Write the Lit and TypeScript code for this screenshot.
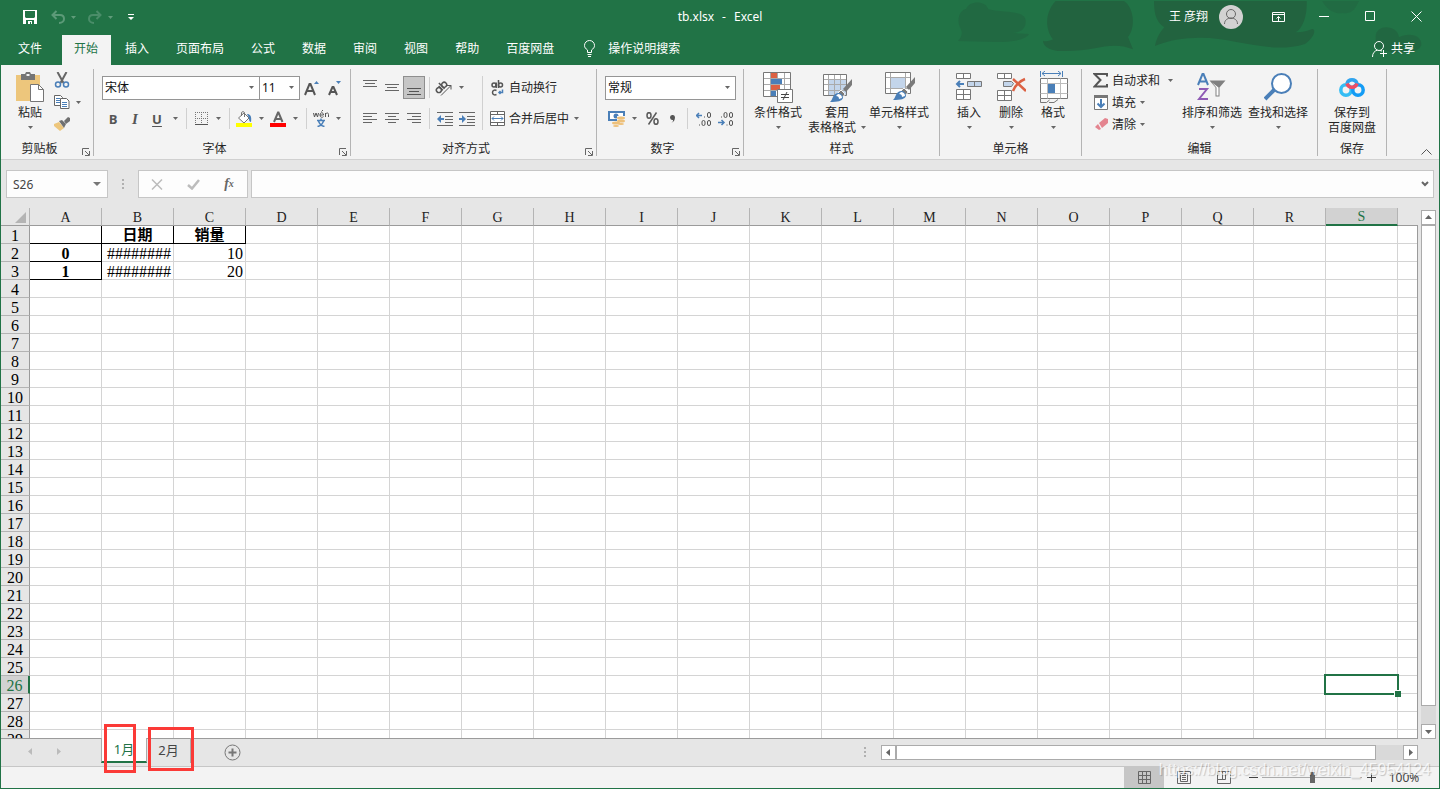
import { LitElement, html, css, nothing, TemplateResult } from "lit";
import { customElement, state } from "lit/decorators.js";
import { classMap } from "lit/directives/class-map.js";

const caret = html`<svg class="caret" width="5" height="3" viewBox="0 0 5 3"><path d="M0 0h5L2.5 3z" fill="#666" /></svg>`;

const brush = html`<svg x="13" y="8" width="24" height="24" viewBox="0 0 24 24">
  <path d="M23 0v6l-6 7-3-3z" fill="#7a7a7a" />
  <path d="M12 11l4 4-2 3-5-4z" fill="#7a7a7a" stroke="#f3f3f3" />
  <path d="M9 14c3 0 5 2 5 5-1 3-5 4-13 4 3-2 2-8 8-9z" fill="#4a7fb8" />
  <path d="M9 15c2 0 4 1 4 4l-3 1c0-2-1-3-3-3z" fill="#fff" />
</svg>`;

const icons: Record<string, TemplateResult> = {
  save: html`<svg width="14" height="14" viewBox="0 0 14 14"><path d="M0 0h14v14H0z" fill="#fff" /><path d="M2 1h10v6l-1 1H3L2 7zM3 10h8v4H3z" fill="#217346" /><path d="M5 11h4v3H8v-2H7v2H5z" fill="#fff" /></svg>`,
  undo: html`<svg width="14" height="14" viewBox="0 0 14 14" fill="none" stroke="#5c9a78" stroke-width="2"><path d="M5.500 1L1.500 5l4 4M2 5h7c3 0 4 2 4 4s-2 4-5 4" /></svg>`,
  redo: html`<svg width="14" height="14" viewBox="0 0 14 14" fill="none" stroke="#4a8d69" stroke-width="2"><path d="M8.500 1l4 4-4 4M12 5H5C2 5 1 7 1 9s2 4 5 4" /></svg>`,
  quick: html`<svg width="6" height="6" viewBox="0 0 6 6" fill="#fff"><path d="M0 0h6v1H0zM0 3h6L3 6z" /></svg>`,
  bulb: html`<svg width="13" height="17" viewBox="0 0 13 17" fill="none" stroke="#fff"><path d="M4.500 12.500V10C2.500 8.500 1.500 7.500 1.500 5.500a5 5 0 0 1 10 0c0 2-1 3-3 4.500v2.500zM4.500 14.500h4M5 16.500h3" /></svg>`,
  share: html`<svg width="15" height="16" viewBox="0 0 15 16" fill="none" stroke="#fff"><circle cx="7" cy="5" r="4.500" /><path d="M.5 16c0-4 2-6 5-7M8 9.500l2 .5M11.500 9v7M8 12.500h7" /></svg>`,
  ribbonBox: html`<svg width="13" height="10" viewBox="0 0 13 10" fill="none" stroke="#fff"><path d="M.5.5h12v9H.5zM0 2.500h13M6.500 9V4.500M4.500 6.500l2-2 2 2" /></svg>`,
  minimize: html`<svg width="11" height="11" viewBox="0 0 11 11" stroke="#fff"><path d="M0 5.500h10" /></svg>`,
  maximize: html`<svg width="11" height="11" viewBox="0 0 11 11" fill="none" stroke="#fff"><path d="M.5.5h9v9H.5z" /></svg>`,
  close: html`<svg width="11" height="11" viewBox="0 0 11 11" stroke="#fff"><path d="M.5.5l10 10M10.500.5l-10 10" /></svg>`,
  paste: html`<svg width="32" height="32" viewBox="0 0 32 32"><path d="M2 4h24v26H2z" fill="#edc67c" /><path d="M7 3h4l1-2h4l1 2h4v6H7z" fill="#757575" /><path d="M12.500 3h3v2h-3z" fill="#f3f3f3" /><path d="M16.500 13.500h8l5 5v12h-13z" fill="#fff" stroke="#757575" /><path d="M24.500 13.500v5h5" fill="none" stroke="#757575" /></svg>`,
  cut: html`<svg width="16" height="16" viewBox="0 0 16 16" fill="none"><path d="M3.500 0l6 11M12.500 0l-6 11" stroke="#666" stroke-width="2" /><circle cx="4" cy="12.500" r="2.500" stroke="#4a7fb8" stroke-width="1.500" /><circle cx="12" cy="12.500" r="2.500" stroke="#4a7fb8" stroke-width="1.500" /></svg>`,
  copy: html`<svg width="16" height="14" viewBox="0 0 16 14" stroke="#666"><path d="M.5.5h6l2 2v8h-8z" fill="#fff" /><path d="M2 3.500h4M2 5.500h4M2 7.500h4" stroke="#4a7fb8" /><path d="M6.500 3.500h6l2.500 2.500v7.500H6.500z" fill="#fff" /><path d="M8 7.500h5M8 9.500h5M8 11.500h5" stroke="#4a7fb8" /></svg>`,
  format: html`<svg width="16" height="16" viewBox="0 0 16 16"><path d="M0 8l5-2 5 6-4 3-6-5z" fill="#edc67c" /><path d="M5 5l3-1 4 4-2 4z" fill="#707070" /><path d="M10 5l4-4 2 1v3l-4 3z" fill="#707070" /></svg>`,
  grow: html`<svg width="16" height="16" viewBox="0 0 16 16"><path d="M1 15L5.500 4h1L11 15M3 11h6" fill="none" stroke="#555" stroke-width="2" /><path d="M10 4l2.500-3L15 4z" fill="#4a7fb8" /></svg>`,
  shrink: html`<svg width="16" height="16" viewBox="0 0 16 16"><path d="M3 15l3.500-8h1L11 15M5 12h4" fill="none" stroke="#555" stroke-width="2" /><path d="M10 1h5l-2.500 3z" fill="#4a7fb8" /></svg>`,
  border: html`<svg width="13" height="13" viewBox="0 0 13 13" stroke="#777" stroke-dasharray="1 1"><path d="M0 .5h13M0 6.500h13M.5 0v12M6.500 0v12M12.500 0v12" /><path d="M0 12.500h13" stroke-dasharray="none" stroke="#555" /></svg>`,
  fill: html`<svg width="16" height="16" viewBox="0 0 16 16"><path d="M0 12h16v4H0z" fill="#ffff00" /><path d="M2.500 7L8 2l5 5-5 5z" fill="#fff" stroke="#757575" /><path d="M5.500 5V1.500L7 .5l1.500 1V6" fill="none" stroke="#757575" /><path d="M11 3c3 0 5 2 4 8-2 0-2-3-2-4z" fill="#4a7fb8" /></svg>`,
  color: html`<svg width="16" height="16" viewBox="0 0 16 16"><path d="M0 12h16v4H0z" fill="#ff0000" /><path d="M4 11l4-9.500h.5l4 9.500M5.500 8h6" fill="none" stroke="#666" stroke-width="2" /></svg>`,
  phonetic: html`<svg width="16" height="17" viewBox="0 0 16 17" fill="none"><path d="M.5 3l1 4 1.500-4 1.500 4 1-4M7 5h3.500c0-3-3.500-3-3.500 0s3 2.500 3.500 1.500M8.500 1.500L10 0M12.500 7V3M12.500 4.500c1-2 3-2 3 0V7" stroke="#555" /><path d="M4 10.500h8M8 8.500v2M5.500 11c1 3 3 5 6 5.500M10.500 11c-1 3-3 5-6 5.500" stroke="#4a7fb8" stroke-width="1.500" /></svg>`,
  top: html`<svg width="14" height="15" viewBox="0 0 14 15" stroke="#666"><path d="M0 .5h14M2 3.500h10M0 6.500h14" /></svg>`,
  middle: html`<svg width="14" height="15" viewBox="0 0 14 15" stroke="#666"><path d="M0 4.500h14M2 7.500h10M0 10.500h14" /></svg>`,
  bottom: html`<svg width="14" height="15" viewBox="0 0 14 15" stroke="#555"><path d="M0 8.500h14M2 11.500h10M0 14.500h14" /></svg>`,
  left: html`<svg width="14" height="11" viewBox="0 0 14 11" stroke="#666"><path d="M0 .5h14M0 3.500h9M0 6.500h14M0 9.500h9" /></svg>`,
  center: html`<svg width="14" height="11" viewBox="0 0 14 11" stroke="#666"><path d="M0 .5h14M3 3.500h8M0 6.500h14M3 9.500h8" /></svg>`,
  right: html`<svg width="14" height="11" viewBox="0 0 14 11" stroke="#666"><path d="M0 .5h14M5 3.500h9M0 6.500h14M5 9.500h9" /></svg>`,
  rotate: html`<svg width="18" height="16" viewBox="0 0 18 16" fill="none" stroke="#555"><g transform="rotate(-45 6 8)" stroke-width="1.500"><circle cx="3" cy="8" r="2.500" /><path d="M5.700 5v6M8 3v8" /><circle cx="10.500" cy="8" r="2.500" /></g><path d="M6 15.500L16 5.500M12 5.500h4v4" /></svg>`,
  outdent: html`<svg width="16" height="14" viewBox="0 0 16 14"><path d="M0 .5h16M8 4.500h8M8 7.500h8M8 10.500h8M0 13.500h16" stroke="#666" /><path d="M0 7l4-4v3h3v2H4v3z" fill="#4a7fb8" /></svg>`,
  indent: html`<svg width="16" height="14" viewBox="0 0 16 14"><path d="M0 .5h16M8 4.500h8M8 7.500h8M8 10.500h8M0 13.500h16" stroke="#666" /><path d="M7 7L3 3v3H0v2h3v3z" fill="#4a7fb8" /></svg>`,
  wrap: html`<svg width="16" height="16" viewBox="0 0 16 16" fill="none" stroke="#555" stroke-width="1.500"><circle cx="4" cy="5" r="2" /><path d="M6.200 2.500V8M8.500 0v8M6.500 10.500c-2-1-4 0-4 2s2 3 4 2" /><circle cx="10.500" cy="5" r="2" /><path d="M12.500 9.500v3H9M10.500 11L9 12.500l1.500 1.500" stroke="#4a7fb8" /></svg>`,
  merge: html`<svg width="16" height="16" viewBox="0 0 16 16" fill="none"><path d="M.5.5h14v14H.5z" fill="#fff" stroke="#666" /><path d="M.5 3.500h14M.5 11.500h14M7.500.5v3M7.500 11.500v3" stroke="#666" /><path d="M2 7.500h11M4 5.500l-2 2 2 2M11 5.500l2 2-2 2" stroke="#4a7fb8" /></svg>`,
  currency: html`<svg width="17" height="16" viewBox="0 0 17 16"><path d="M1 1h15v8H1z" fill="#fff" stroke="#4a7fb8" stroke-width="2" /><circle cx="8" cy="5" r="2.500" fill="#4a7fb8" /><path d="M9 5h8v10H4V10h5z" fill="#f3f3f3" /><g fill="#edc07a"><ellipse cx="13" cy="7" rx="4" ry="1.500" /><ellipse cx="13" cy="10" rx="4" ry="1.500" /><ellipse cx="8" cy="12" rx="4" ry="1.500" /><ellipse cx="13" cy="13" rx="3" ry="1" /><ellipse cx="8" cy="15" rx="3" ry="1" /></g></svg>`,
  percent: html`<svg width="13" height="13" viewBox="0 0 13 13" fill="none" stroke="#5a5a5a" stroke-width="1.500"><ellipse cx="3" cy="3.500" rx="2" ry="2.800" /><ellipse cx="10" cy="9.500" rx="2" ry="2.800" /><path d="M10.500 .5l-8 12" /></svg>`,
  comma: html`<svg width="6" height="9" viewBox="0 0 6 9"><path d="M1 9c2-1 2-2 2-3a2.500 2.500 0 1 1 2-3c0 3-1 5-4 6z" fill="#555" /></svg>`,
  moreDecimals: html`<svg width="15" height="14" viewBox="0 0 15 14" fill="none" stroke="#555"><path d="M0 3.500h6M3 1L.5 3.500 3 6" stroke="#4a7fb8" stroke-width="1.500" /><path d="M8 5h1M3 13h1" /><rect x="11.500" y=".5" width="3" height="5" rx="1.500" /><rect x="6" y="8.500" width="3" height="5" rx="1.500" /><rect x="11.500" y="8.500" width="3" height="5" rx="1.500" /></svg>`,
  lessDecimals: html`<svg width="15" height="14" viewBox="0 0 15 14" fill="none" stroke="#555"><path d="M0 10.500h6M3.500 8L6 10.500 3.500 13" stroke="#4a7fb8" stroke-width="1.500" /><path d="M3 5h1M8.500 13h1" /><rect x="6" y=".5" width="3" height="5" rx="1.500" /><rect x="11.500" y=".5" width="3" height="5" rx="1.500" /><rect x="11.500" y="8.500" width="3" height="5" rx="1.500" /></svg>`,
  conditional: html`<svg width="30" height="31" viewBox="0 0 30 31"><path d="M.5.5h27v24H.5z" fill="#fff" /><path d="M.5 6.500h27M.5 12.500h27M.5 18.500h27M7.500.5v24M14.500.5v24M21.500.5v24" stroke="#aaa" /><path d="M.5.5h27v24H.5z" fill="none" stroke="#777" /><path d="M8 1h6v5H8zM8 13h9v5H8z" fill="#dc6143" /><path d="M8 7h11v5H8zM8 19h5v5H8z" fill="#4a7fb8" /><path d="M14.500 17.500h15v13h-15z" fill="#fff" stroke="#777" /><path d="M18 22.500h8M18 25.500h8M24 20l-4 8" stroke="#444" /></svg>`,
  tableStyle: html`<svg width="42" height="32" viewBox="0 0 42 32"><path d="M7.500 3.500h23v21h-23z" fill="#fff" /><path d="M13 9h17v15H13z" fill="#c3d5eb" /><path d="M7.500 8.500h23M7.500 13.500h23M7.500 19.500h23M12.500 3.500v21M18.500 3.500v21M24.500 3.500v21" stroke="#aaa" /><path d="M7.500 3.500h23v21h-23z" fill="none" stroke="#777" />${brush}</svg>`,
  cellStyle: html`<svg width="42" height="32" viewBox="0 0 42 32"><path d="M7.500 1.500h25v21h-25z" fill="#fff" /><path d="M7.500 6.500h25M7.500 17.500h25M12.500 1.500v21M27.500 1.500v21" stroke="#aaa" /><path d="M13 7h14v10H13z" fill="#c3d5eb" /><path d="M7.500 1.500h25v21h-25z" fill="none" stroke="#777" /><svg x="1" y="-2" width="41" height="34">${brush}</svg></svg>`,
  insert: html`<svg width="28" height="30" viewBox="0 0 28 30" fill="#fff" stroke="#777"><path d="M1.500 1.500h14v5h-14zM8.500 1.500v5M1.500 17.500h14v10h-14zM1.500 22.500h14M8.500 17.500v10" /><path d="M12.500 9.500h14v5h-14zM19.500 9.500v5" fill="#c3d5eb" /><path d="M2 12h7M5 9l-3 3 3 3" fill="none" stroke="#4a7fb8" stroke-width="2" /></svg>`,
  remove: html`<svg width="30" height="30" viewBox="0 0 30 30" fill="#fff" stroke="#777"><path d="M1.500 1.500h14v5h-14zM8.500 1.500v5M1.500 18.500h14v10h-14zM1.500 23.500h14M8.500 18.500v10" /><path d="M7.500 9.500h8l2 2-2 3h-8z" fill="#c3d5eb" /><path d="M17 7l13 12M29 7C24 9 19 14 17 19" fill="none" stroke="#dc6143" stroke-width="2.500" /></svg>`,
  cellFormat: html`<svg width="29" height="32" viewBox="0 0 29 32" fill="none"><path d="M1.500 0v6M23.500 0v6M3 2.500h19M6 0L3 2.500 6 5M19 0l3 2.500L19 5" stroke="#4a7fb8" /><path d="M1.500 7.500h27v20h-27z" fill="#fff" stroke="#777" /><path d="M1.500 12.500h27M1.500 22.500h27M8.500 7.500v20M21.500 7.500v20" stroke="#bbb" /><path d="M9 13h7v9H9z" fill="#4a7fb8" /><path d="M1.500 28v3.500h6l3-2.500M10 31.500h5l4-3" stroke="#777" /></svg>`,
  sum: html`<svg width="15" height="15" viewBox="0 0 15 15" fill="none"><path d="M14 3.500V1H1.500l6 6-6 6.500H14V11" stroke="#555" stroke-width="2" /></svg>`,
  down: html`<svg width="14" height="15" viewBox="0 0 14 15" fill="none"><path d="M.5.5h13v14H.5z" fill="#fff" stroke="#777" /><path d="M0 0h14v3H0z" fill="#777" /><path d="M7 4v8M3.500 8.500L7 12l3.500-3.500" stroke="#4a7fb8" stroke-width="2" /></svg>`,
  eraser: html`<svg width="14" height="13" viewBox="0 0 14 13"><path d="M5 5l6-5 3 1v4L8 10z" fill="#e4848f" /><path d="M4 6l3 5-2 1-4-3z" fill="#e4848f" /></svg>`,
  sort: html`<svg width="30" height="30" viewBox="0 0 30 30" fill="none"><path d="M1 13L5.500 2h1L11 13M3 9.500h6" stroke="#4a7fb8" stroke-width="2" /><path d="M2 17h8L2 27h9" stroke="#8f5bb5" stroke-width="2" /><path d="M12.500 8.500h16l-6 7v9h-4v-9z" fill="#808080" /><path d="M15 10.500l4.500 5v8h2v-8z" fill="#fff" /></svg>`,
  find: html`<svg width="28" height="28" viewBox="0 0 28 28" fill="none" stroke="#4a7fb8"><path d="M1 26L11 16" stroke-width="4" /><circle cx="17.500" cy="10.500" r="9.500" fill="#fff" stroke-width="2" /></svg>`,
  cloud: html`<svg width="26" height="22" viewBox="0 0 26 22" fill="none" stroke-width="3.500"><circle cx="7" cy="14" r="5.200" stroke="#35bdf4" /><circle cx="19" cy="14" r="5.200" stroke="#149cf5" /><path d="M8 7.500a5.200 5.200 0 0 1 10 0" stroke="#31a4ee" /><path d="M8 7.500a5.200 5.200 0 0 0 10 0" stroke="#ef4d63" /></svg>`,
  launcher: html`<svg width="8" height="8" viewBox="0 0 8 8" fill="none" stroke="#666"><path d="M.5 7V.5H7M3 3l4 4M7.500 3v4.500H3" /></svg>`,
  collapse: html`<svg width="11" height="6" viewBox="0 0 11 6" fill="none" stroke="#555"><path d="M.5 5.500l5-5 5 5" /></svg>`,
  cancel: html`<svg width="12" height="11" viewBox="0 0 12 11" stroke="#bcbcbc" stroke-width="1.500"><path d="M1 .5l10 10M11 .5l-10 10" /></svg>`,
  enter: html`<svg width="13" height="11" viewBox="0 0 13 11" fill="none" stroke="#bcbcbc" stroke-width="2.500"><path d="M1 6l4 3.500 7-8.500" /></svg>`,
  plus: html`<svg width="17" height="17" viewBox="0 0 17 17" fill="none" stroke="#777"><circle cx="8.500" cy="8.500" r="7.500" /><path d="M4.500 8.500h8M8.500 4.500v8" stroke-width="2" /></svg>`,
  normal: html`<svg width="13" height="13" viewBox="0 0 13 13" fill="none" stroke="#666"><path d="M.5.5h12v12H.5zM.5 4.500h12M.5 8.500h12M4.500.5v12M8.500.5v12" /></svg>`,
  pageLayout: html`<svg width="14" height="13" viewBox="0 0 14 13" fill="none" stroke="#666"><path d="M.5.5h13v12H.5zM3.500 2.500h7v8h-7zM5 4.500h4M5 6.500h4M5 8.500h4" /></svg>`,
  pageBreak: html`<svg width="14" height="13" viewBox="0 0 14 13" fill="none" stroke="#666"><path d="M.5.5h13v12H.5zM.5 8.500h8v-8M5.500.5v8" /></svg>`,
};

const arrow = (d: string, fill = "#666") =>
  html`<svg width="9" height="9" viewBox="0 0 9 9"><path d=${d} fill=${fill} /></svg>`;

const TABS = ["开始", "插入", "页面布局", "公式", "数据", "审阅", "视图", "帮助", "百度网盘"];
const COL_WIDTH = 72;
const ROW_HEIGHT = 18;
const SIDE_CHROME = 52;
const BARS_CHROME = 276;
const DATA: Record<string, [string, string]> = {
  A1: ["", "boxed"], B1: ["日期", "boxed head"], C1: ["销量", "boxed head"],
  A2: ["0", "boxed"], B2: ["########", "num"], C2: ["10", "num"],
  A3: ["1", "boxed"], B3: ["########", "num"], C3: ["20", "num"],
};

const columnName = (i: number): string =>
  i < 26 ? String.fromCharCode(65 + i) : columnName(Math.floor(i / 26) - 1) + columnName(i % 26);

@customElement("app-root")
export class AppRoot extends LitElement {
  @state() private tab = "开始";
  @state() private sheet = "1月";
  @state() private selected = "S26";

  static styles = css`
    * { box-sizing: border-box; }
    :host {
      box-sizing: border-box; display: flex; flex-direction: column; position: relative; height: 100vh; overflow: hidden;
      border: 1px solid #217346; border-top: 0; background: #e6e6e6; color: #262626;
      font: 12px/15px "Noto Sans", "Noto Sans CJK SC", sans-serif;
    }
    button, input, select { font: inherit; color: inherit; margin: 0; border-radius: 0; }
    button { border: 0; padding: 0; background: none; display: flex; align-items: center; justify-content: center; white-space: nowrap; }
    svg { display: block; flex: none; }
    .top { position: relative; background: #217346; color: #fff; flex: none; }
    .decor { position: absolute; right: 0; top: 0; }
    .title { position: relative; height: 35px; padding-bottom: 2px; display: grid; grid-template-columns: 1fr auto 1fr; align-items: center; }
    .quick { display: flex; align-items: center; padding: 1px 0 0 22px; gap: 6px; }
    .quick .save { margin-right: 8px; }
    .quick .more { margin-left: 3px; }
    .quick .caret { opacity: 0.6; margin-right: 6px; }
    .doc { display: flex; gap: 8px; }
    .account { display: flex; align-items: center; justify-content: flex-end; }
    .avatar { width: 24px; height: 24px; margin: 0 12px 0 11px; border-radius: 50%; background: #d2d2d2; }
    .win { width: 46px; height: 32px; }
    .tabs { position: relative; display: flex; height: 30px; gap: 2px; padding-left: 5px; }
    .tabs button { height: 30px; padding: 0 13px 3px 12px; }
    .tabs .file { margin-right: 5px; }
    .tabs .on { background: #f3f3f3; color: #217346; }
    .tabs .tell { gap: 12px; padding-left: 14px; }
    .tabs .share { gap: 4px; margin-left: auto; padding-right: 24px; }
    .ribbon { flex: none; display: flex; height: 95px; padding: 4px 0; background: #f3f3f3; border-bottom: 1px solid #d0d0d0; }
    .group { flex: none; display: flex; flex-direction: column; height: 87px; border-right: 1px solid #b4b4b4; }
    .body { display: flex; height: 72px; }
    .foot { display: flex; height: 15px; }
    .foot span { flex: 1; text-align: center; }
    .foot button { width: 15px; align-items: flex-end; }
    .clip { width: 93px; } .clip .body { padding-left: 8px; }
    .font { width: 257px; } .font .body, .align .body, .number .body { padding: 7px 0 0 8px; }
    .align { width: 246px; } .number { width: 147px; }
    .styles { width: 196px; } .styles .body { padding-left: 4px; }
    .cells { width: 142px; } .cells .body { padding-left: 8px; }
    .edit { width: 236px; } .edit .body { padding-left: 8px; }
    .keep { width: 69px; }
    .collapse { margin: auto 7px 0 auto; width: 12px; height: 6px; }
    .big { flex-direction: column; justify-content: flex-start; width: 42px; }
    .big .pic { height: 36px; display: flex; align-items: center; }
    .big .text { height: 15px; }
    .big .line { height: 15px; display: flex; align-items: center; gap: 5px; }
    .w58 { width: 58px; } .w60 { width: 60px; } .w66 { width: 66px; } .w68 { width: 68px; }
    .rows { display: flex; flex-direction: column; }
    .rows .row { height: 22px; display: flex; align-items: center; }
    .bars { display: flex; flex-direction: column; gap: 8px; }
    .bar { display: flex; height: 23px; align-items: center; }
    .ib { width: 22px; height: 23px; font: bold 13px/20px "Open Sans", sans-serif; color: #555; }
    .ib.narrow { width: 20px; }
    .ib.on { background: #c6c6c6; border: 1px solid #8e8e8e; }
    .ib.italic { font-style: italic; font-family: "Liberation Serif", serif; font-size: 15px; }
    .ib.under { text-decoration: underline; text-underline-offset: 2px; }
    .grow { margin-left: 1px; }
    .dd { width: 14px; height: 22px; }
    .row .dd { width: 10px; }
    .vs { width: 1px; height: 21px; margin: 0 4px; background: #d0d0d0; }
    .vs.tall { height: 54px; }
    .labelled { gap: 3px; padding-left: 3px; height: 23px; }
    .small { width: 89px; } .small button { gap: 4px; padding-left: 3px; height: 22px; }
    .small .pic { width: 15px; display: flex; justify-content: center; }
    .small .far { margin-left: 4px; display: flex; }
    .combo { position: relative; display: flex; align-items: center; height: 24px; background: #fff; border: 1px solid #959595; }
    .combo select { appearance: none; width: 100%; height: 22px; border: 0; background: none; padding: 0 2px; outline: 0; color: #111; }
    .combo .caret { position: absolute; right: 5px; pointer-events: none; }
    .face { width: 158px; } .size { width: 41px; margin-left: -1px; } .kind { width: 131px; }
    .formula { flex: none; height: 48px; display: flex; align-items: center; padding: 0 5px 0 5px; }
    .box { height: 28px; display: flex; align-items: center; background: #fdfdfd; border: 1px solid #c6c6c6; }
    .name { width: 102px; } .name input { width: 80px; border: 0; padding: 0 6px; background: none; outline: 0; color: #444; }
    .dots { display: grid; gap: 2px; width: 2px; margin: 0 14px; }
    .dots i { width: 2px; height: 2px; background: #b0b0b0; }
    .ops { width: 110px; justify-content: space-around; margin-right: 3px; }
    .fx { font: italic bold 14px/20px "Liberation Serif", serif; color: #666; } .fx sub { font-size: 10px; }
    .ops button { width: 36px; height: 26px; }
    .entry { flex: 1; } .entry input { flex: 1; min-width: 0; border: 0; background: none; outline: 0; }
    .entry button { width: 17px; height: 26px; }
    .main { flex: 1; min-height: 0; display: flex; }
    .sheet { position: relative; flex: 1; min-width: 0; overflow: hidden; border-bottom: 1px solid #9b9b9b; }
    .sheet::after { content: ""; position: absolute; top: 17px; right: 0; bottom: 0; width: 1px; background: #9b9b9b; }
    table { table-layout: fixed; width: 1px; border-collapse: separate; border-spacing: 0; background: #fff; font: 16px/15px "Liberation Serif", "Noto Sans CJK SC", serif; color: #000; }
    .ch { width: 72px; } .rh { width: 29px; }
    th, td { height: 18px; padding: 2px 0 0; overflow: hidden; font-weight: normal; white-space: nowrap; border-right: 1px solid #d4d4d4; border-bottom: 1px solid #d4d4d4; }
    thead th { background: #e6e6e6; border-right-color: #b4b4b4; border-bottom-color: #9b9b9b; font-size: 14px; line-height: 14px; color: #222; }
    tbody th { background: #e6e6e6; border-right-color: #9b9b9b; border-bottom-color: #b4b4b4; }
    thead .corner { border-right-color: #b4b4b4; }
    .corner svg { margin: 0 3px 0 auto; }
    thead .on { background: #d2d2d2; color: #217346; border-bottom: 2px solid #217346; }
    tbody th.on { background: #d2d2d2; color: #217346; border-right: 2px solid #217346; }
    .boxed { border-color: #000; text-align: center; font-weight: bold; }
    .head { font-size: 15px; }
    .num { text-align: right; padding-right: 2px; }
    .cursor { position: relative; overflow: visible; }
    .cursor::before { content: ""; position: absolute; inset: -2px; border: 2px solid #217346; z-index: 1; }
    .cursor::after { content: ""; position: absolute; right: -4px; bottom: -4px; width: 6px; height: 6px; border: solid #fff; border-width: 1px 0 0 1px; background: #217346; z-index: 2; }
    .vbar { flex: none; width: 21px; padding: 2px 3px 0 3px; display: flex; flex-direction: column; }
    .sb { flex: none; width: 15px; height: 15px; background: #fff; border: 1px solid #ababab; }
    .track { flex: 1; display: flex; background: #d9d9d9; }
    .vbar .track { flex-direction: column; }
    .thumb { flex: 27; background: #fff; border: 1px solid #ababab; } .rest { flex: 1; }
    .hbar .thumb { flex: 18; }
    .book { flex: none; height: 28px; display: flex; padding: 0 21px 0 15px; border-bottom: 1px solid #c6c6c6; }
    .nav { width: 28px; height: 25px; }
    .sheets { display: flex; margin: -1px 0 0 29px; height: 25px; }
    .st { position: relative; width: 44px; height: 25px; font-size: 13px; color: #444; border-right: 1px solid #ababab; }
    .st.on { width: 46px; background: #fff; color: #217346; border-left: 1px solid #ababab; border-bottom: 2px solid #217346; }
    .mark { position: absolute; z-index: 3; border: 3px solid #fb3a37; pointer-events: none; }
    .m1 { left: 2px; top: -14px; width: 32px; height: 49px; } .m2 { left: 1px; top: -11px; width: 46px; height: 44px; }
    .add { width: 24px; height: 26px; margin-left: 29px; }
    .book .dots { margin: 8px 15px 0 auto; align-content: start; }
    .hbar { flex: 0 1 537px; display: flex; height: 15px; margin-top: 6px; }
    .status { flex: none; height: 21px; display: flex; align-items: center; justify-content: flex-end; background: #f3f3f3; color: #444; }
    .view { width: 40px; height: 21px; } .view.on { background: #c6c6c6; }
    .zb { width: 18px; height: 21px; }
    .slider { appearance: none; width: 100px; height: 21px; background: linear-gradient(#ababab, #ababab) center / 100% 1px no-repeat; }
    .slider::-webkit-slider-thumb { appearance: none; width: 5px; height: 11px; background: #666; }
    .pct { width: 48px; height: 21px; margin-right: 11px; }
    .water { position: absolute; right: 8px; bottom: 8px; z-index: 4; font: 16px/20px "Liberation Sans", sans-serif; color: rgba(255, 255, 255, 0.75); text-shadow: 1px 1px 1px rgba(0, 0, 0, 0.2); pointer-events: none; }
  `;

  private onResize = () => this.requestUpdate();

  connectedCallback() {
    super.connectedCallback();
    window.addEventListener("resize", this.onResize);
  }
  disconnectedCallback() {
    window.removeEventListener("resize", this.onResize);
    super.disconnectedCallback();
  }

  private ib(icon: string, label: string, cls = "") {
    return html`<button class="ib ${cls}" aria-label=${label}>${icons[icon]}</button>`;
  }
  private dd(label: string) {
    return html`<button class="dd" aria-label=${label}>${caret}</button>`;
  }
  private big(icon: string, text: string, second: unknown = caret, cls = "") {
    return html`<button class="big ${cls}"><span class="pic">${icons[icon]}</span><span class="text">${text}</span><span class="line">${second}</span></button>`;
  }
  private group(cls: string, label: string, body: TemplateResult, launcher = false) {
    return html`<section class="group ${cls}" aria-label=${label}>
      <div class="body">${body}</div>
      <div class="foot"><span>${label}</span>${launcher ? html`<button aria-label=${label}>${icons.launcher}</button>` : nothing}</div>
    </section>`;
  }
  private combo(cls: string, label: string, value: string) {
    return html`<span class="combo ${cls}"><select aria-label=${label}><option>${value}</option></select>${caret}</span>`;
  }
  private dots() {
    return html`<span class="dots"><i></i><i></i><i></i></span>`;
  }

  private renderTop() {
    return html`<header class="top">
      <svg class="decor" width="500" height="65" viewBox="0 0 1500 195" fill="#22633f">
        <path opacity=".6" d="M57 123C70 108 72 96 62 80 52 55 65 28 82 26 90 2 140 0 148 28 200 40 262 30 260 65c0 25-20 32-40 34l50 3c-20 34-130 22-213 21z" />
        <path d="M312 122c10 4 22 0 30-4C320 90 315 40 350 3h205c30 20 36 80 12 108l15 37c-70-28-110 8-215 5-30 0-55-12-55-31z" />
        <path d="M645 3h458c2 40-10 80-33 94 20 0 40-6 50-10 12 0 6 26-22 45-110 34-220-24-330-18-60 2-90 12-120 24 4-20 12-38 28-56-30-20-30-50-31-79z" />
        <path opacity=".7" d="M1310 110c0-38 66-38 70 2 20-14 70-12 67 24-12 28-60 18-80 24l-57-18z" />
        <path opacity=".5" d="M1150 3h110c-12 24-20 40-50 36-30 4-50-16-60-36z" />
      </svg>
      <div class="title">
        <div class="quick">
          <button class="save" aria-label="保存">${icons.save}</button>
          <button aria-label="撤消">${icons.undo}</button><svg class="caret" width="5" height="3"><path d="M0 0h5L2.500 3z" fill="#8ab89d" /></svg>
          <button aria-label="恢复">${icons.redo}</button><svg class="caret" width="5" height="3"><path d="M0 0h5L2.500 3z" fill="#8ab89d" /></svg>
          <button class="more" aria-label="自定义快速访问工具栏">${icons.quick}</button>
        </div>
        <div class="doc"><span>tb.xlsx</span><span>-</span><span>Excel</span></div>
        <div class="account">
          <span>王 彦翔</span>
          <svg class="avatar" viewBox="0 0 24 24" fill="none" stroke="#666"><circle cx="12" cy="9" r="4.500" /><path d="M5.500 19c0-8 13-8 13 0" /></svg>
          <button class="win" aria-label="功能区显示选项">${icons.ribbonBox}</button>
          <button class="win" aria-label="最小化">${icons.minimize}</button>
          <button class="win" aria-label="最大化">${icons.maximize}</button>
          <button class="win" aria-label="关闭">${icons.close}</button>
        </div>
      </div>
      <nav class="tabs">
        <button class="file">文件</button>
        ${TABS.map((t) => html`<button class=${classMap({ on: t === this.tab })} @click=${() => (this.tab = t)}>${t}</button>`)}
        <button class="tell">${icons.bulb}操作说明搜索</button>
        <button class="share">${icons.share}共享</button>
      </nav>
    </header>`;
  }

  private renderRibbon() {
    return html`<div class="ribbon">
      ${this.group("clip", "剪贴板", html`
        ${this.big("paste", "粘贴")}
        <div class="rows">
          <div class="row">${this.ib("cut", "剪切")}</div>
          <div class="row">${this.ib("copy", "复制")}${this.dd("复制选项")}</div>
          <div class="row">${this.ib("format", "格式刷")}</div>
        </div>`, true)}
      ${this.group("font", "字体", html`<div class="bars">
        <div class="bar">${this.combo("face", "字体", "宋体")}${this.combo("size", "字号", "11")}
          ${this.ib("grow", "增大字号", "grow")}${this.ib("shrink", "减小字号")}</div>
        <div class="bar">
          <button class="ib">B</button><button class="ib italic">I</button><button class="ib under">U</button>${this.dd("下划线")}
          <span class="vs"></span>${this.ib("border", "边框", "narrow")}${this.dd("边框选项")}
          <span class="vs"></span>${this.ib("fill", "填充颜色", "narrow")}${this.dd("填充颜色选项")}${this.ib("color", "字体颜色", "narrow")}${this.dd("字体颜色选项")}
          <span class="vs"></span>${this.ib("phonetic", "拼音", "narrow")}${this.dd("拼音选项")}
        </div></div>`, true)}
      ${this.group("align", "对齐方式", html`
        <div class="bars">
          <div class="bar">${this.ib("top", "顶端对齐")}${this.ib("middle", "垂直居中")}${this.ib("bottom", "底端对齐", "on")}
            <span class="vs"></span>${this.ib("rotate", "方向", "narrow")}${this.dd("方向选项")}</div>
          <div class="bar">${this.ib("left", "左对齐")}${this.ib("center", "居中")}${this.ib("right", "右对齐")}
            <span class="vs"></span>${this.ib("outdent", "减少缩进量")}${this.ib("indent", "增加缩进量")}</div>
        </div>
        <span class="vs tall"></span>
        <div class="bars">
          <div class="bar"><button class="labelled">${icons.wrap}自动换行</button></div>
          <div class="bar"><button class="labelled">${icons.merge}合并后居中</button><span class="vs-gap"></span>${this.dd("合并选项")}</div>
        </div>`, true)}
      ${this.group("number", "数字", html`<div class="bars">
        <div class="bar">${this.combo("kind", "数字格式", "常规")}</div>
        <div class="bar">${this.ib("currency", "会计数字格式")}${this.dd("货币选项")}${this.ib("percent", "百分比")}${this.ib("comma", "千位分隔", "narrow")}
          <span class="vs"></span>${this.ib("moreDecimals", "增加小数位数")}${this.ib("lessDecimals", "减少小数位数")}</div>
        </div>`, true)}
      ${this.group("styles", "样式", html`
        ${this.big("conditional", "条件格式", caret, "w60")}
        ${this.big("tableStyle", "套用", html`表格格式${caret}`, "w58")}
        ${this.big("cellStyle", "单元格样式", caret, "w66")}`)}
      ${this.group("cells", "单元格", html`${this.big("insert", "插入")}${this.big("remove", "删除")}${this.big("cellFormat", "格式")}`)}
      ${this.group("edit", "编辑", html`
        <div class="rows small">
          <div class="row"><button><span class="pic">${icons.sum}</span>自动求和<span class="far">${caret}</span></button></div>
          <div class="row"><button><span class="pic">${icons.down}</span>填充${caret}</button></div>
          <div class="row"><button><span class="pic">${icons.eraser}</span>清除${caret}</button></div>
        </div>
        ${this.big("sort", "排序和筛选", caret, "w66")}${this.big("find", "查找和选择", caret, "w66")}`)}
      ${this.group("keep", "保存", this.big("cloud", "保存到", "百度网盘", "w68"))}
      <button class="collapse" aria-label="折叠功能区">${icons.collapse}</button>
    </div>`;
  }

  private renderFormula() {
    return html`<div class="formula">
      <div class="box name"><input aria-label="名称框" .value=${this.selected} />
        <button aria-label="名称列表"><svg width="18" height="5" viewBox="0 0 18 5"><path d="M6 0h8l-4 4z" fill="#777" /></svg></button></div>
      ${this.dots()}
      <div class="box ops"><button aria-label="取消">${icons.cancel}</button><button aria-label="输入">${icons.enter}</button><button class="fx" aria-label="插入函数">f<sub>x</sub></button></div>
      <div class="box entry"><input aria-label="编辑栏" />
        <button aria-label="展开编辑栏"><svg width="8" height="6" viewBox="0 0 8 6" fill="none" stroke="#666" stroke-width="2"><path d="M1 1l3 3 3-3" /></svg></button></div>
    </div>`;
  }

  private renderCell(col: string, row: number) {
    const id = col + row;
    const [text, cls] = DATA[id] ?? ["", ""];
    return html`<td class="${cls} ${id === this.selected ? "cursor" : ""}" @click=${() => (this.selected = id)}>${text}</td>`;
  }

  private renderSheet() {
    const [, selCol, selRow] = /([A-Z]+)(\d+)/.exec(this.selected)!;
    // Only the columns and rows that reach into the window are drawn; a column
    // that shows less than half of its width carries no letter.
    const visible = (window.innerWidth - SIDE_CHROME) / COL_WIDTH;
    const columns = Array.from({ length: Math.ceil(visible) }, (_, i) => columnName(i));
    const rows = Array.from({ length: Math.ceil((window.innerHeight - BARS_CHROME) / ROW_HEIGHT) }, (_, i) => i + 1);
    return html`<div class="main">
      <div class="sheet"><table>
        <colgroup><col class="rh" />${columns.map(() => html`<col class="ch" />`)}</colgroup>
        <thead><tr><th class="corner"><svg width="11" height="11" viewBox="0 0 11 11"><path d="M11 0v11H0z" fill="#b4b4b4" /></svg></th>
          ${columns.map((c, i) => html`<th scope="col" class=${classMap({ on: c === selCol })}>${visible - i > 0.5 ? c : nothing}</th>`)}</tr></thead>
        <tbody>${rows.map((r) => html`<tr><th scope="row" class=${classMap({ on: String(r) === selRow })}>${r}</th>${columns.map((c) => this.renderCell(c, r))}</tr>`)}</tbody>
      </table></div>
      <div class="vbar">
        <button class="sb" aria-label="向上滚动">${arrow("M1 6h7L4.500 2z")}</button>
        <div class="track"><div class="thumb"></div><div class="rest"></div></div>
        <button class="sb" aria-label="向下滚动">${arrow("M1 3h7L4.500 7z")}</button>
      </div>
    </div>`;
  }

  private renderBottom() {
    return html`<div class="book">
        <button class="nav" aria-label="上一张工作表">${arrow("M6 1v7L2 4.500z", "#bbb")}</button>
        <button class="nav" aria-label="下一张工作表">${arrow("M3 1v7l4-3.500z", "#bbb")}</button>
        <div class="sheets">${["1月", "2月"].map((s, i) => html`<button class=${classMap({ st: true, on: s === this.sheet })} @click=${() => (this.sheet = s)}>${s}<span class="mark m${i + 1}"></span></button>`)}</div>
        <button class="add" aria-label="新工作表">${icons.plus}</button>
        ${this.dots()}
        <div class="hbar">
          <button class="sb" aria-label="向左滚动">${arrow("M6 1v7L2 4.500z")}</button>
          <div class="track"><div class="thumb"></div><div class="rest"></div></div>
          <button class="sb" aria-label="向右滚动">${arrow("M3 1v7l4-3.500z")}</button>
        </div>
      </div>
      <footer class="status">
        <button class="view on" aria-label="普通">${icons.normal}</button>
        <button class="view" aria-label="页面布局">${icons.pageLayout}</button>
        <button class="view" aria-label="分页预览">${icons.pageBreak}</button>
        <button class="zb" aria-label="缩小"><svg width="9" height="9" stroke="#444"><path d="M0 4.500h9" /></svg></button>
        <input class="slider" type="range" aria-label="缩放" min="0" max="200" value="100" />
        <button class="zb" aria-label="放大"><svg width="9" height="9" stroke="#444"><path d="M0 4.500h9M4.500 0v9" /></svg></button>
        <button class="pct">100%</button>
      </footer>
      <div class="water">https://blog.csdn.net/weixin_45954124</div>`;
  }

  render() {
    return html`${this.renderTop()}${this.renderRibbon()}${this.renderFormula()}${this.renderSheet()}${this.renderBottom()}`;
  }
}
